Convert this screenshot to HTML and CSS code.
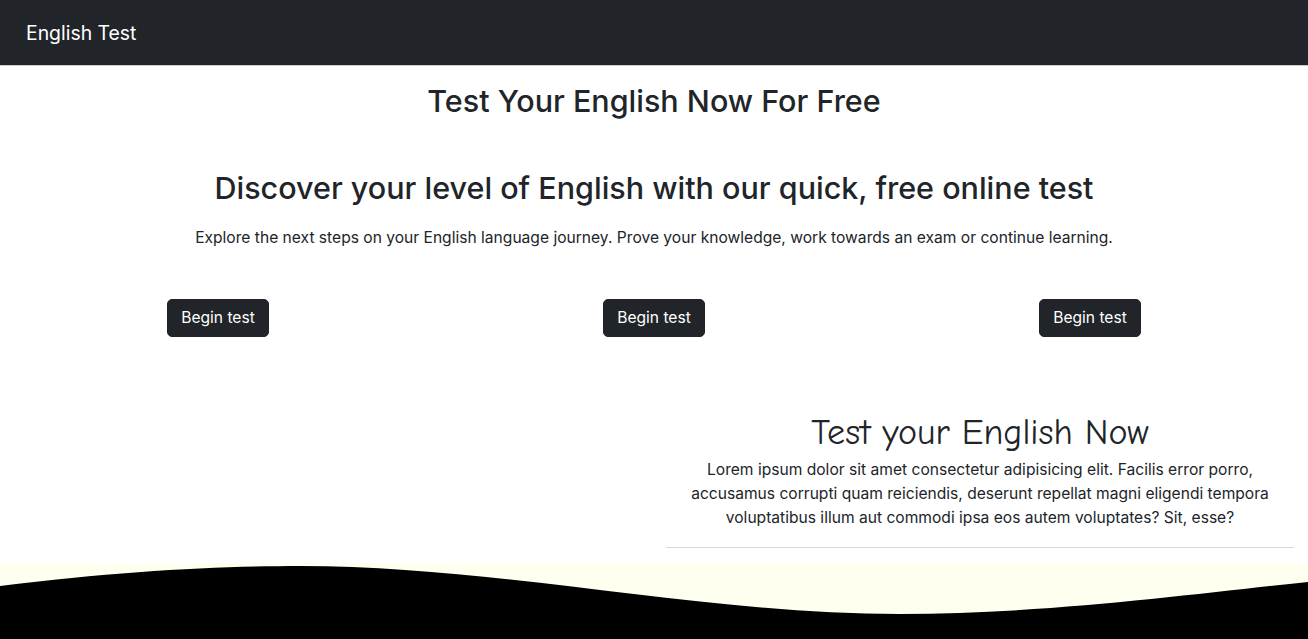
FILE: index.html
```html
<!DOCTYPE html>
<html lang="en">
<head>
<meta charset="utf-8">
<title>English Test</title>
<link rel="stylesheet" href="styles.css">
</head>
<body>
<nav class="navbar"><a class="brand" href="#">English Test</a></nav>
<main>
  <h1 class="title">Test Your English Now For Free</h1>
  <section class="intro">
    <h2 class="intro-head">Discover your level of English with our quick, free online test</h2>
    <p class="intro-text">Explore the next steps on your English language journey. Prove your knowledge, work towards an exam or continue learning.</p>
  </section>
  <div class="btn-row">
    <div class="btn-col"><button class="btn">Begin test</button></div>
    <div class="btn-col"><button class="btn">Begin test</button></div>
    <div class="btn-col"><button class="btn">Begin test</button></div>
  </div>
  <div class="info-row">
    <div class="info-col"></div>
    <div class="info-col info-text">
      <h2 class="fun-head">Test your English Now</h2>
      <p class="lorem">Lorem ipsum dolor sit amet consectetur adipisicing elit. Facilis error porro, accusamus corrupti quam reiciendis, deserunt repellat magni eligendi tempora voluptatibus illum aut commodi ipsa eos autem voluptates? Sit, esse?</p>
      <hr class="rule">
    </div>
  </div>
</main>
<footer class="wave">
  <svg class="wave-svg" viewBox="0 0 1308 76" preserveAspectRatio="none" aria-hidden="true">
    <path d="M0 23 C120 8 220 3 300 3 C500 3 700 51 900 51 C1050 51 1200 30 1308 19 L1308 76 L0 76 Z" fill="#000"/>
  </svg>
</footer>
</body>
</html>
```
FILE: styles.css
```css
* { box-sizing: border-box; }
html, body { margin: 0; padding: 0; }
body {
  font-family: Inter, "Noto Sans", sans-serif;
  color: #212529;
  background: #fff;
  font-size: 15.6px;
  line-height: 24px;
}
.navbar {
  height: 66px;
  background: #212529;
  border-bottom: 1px solid #c8cbcf;
  display: flex;
  align-items: center;
  padding: 0 26px;
}
.brand {
  color: #fff;
  text-decoration: none;
  font-size: 19.4px;
  line-height: 30px;
}
.title {
  margin: 16px 0 0;
  text-align: center;
  font-size: 30.5px;
  font-weight: 500;
  line-height: 37px;
}
.intro { text-align: center; margin-top: 50px; }
.intro-head {
  margin: 0 0 20px;
  font-size: 30.5px;
  font-weight: 500;
  line-height: 37px;
}
.intro-text { margin: 0; }
.btn-row {
  display: grid;
  grid-template-columns: repeat(3, 1fr);
  margin-top: 49px;
}
.btn-col { display: flex; justify-content: center; }
.btn {
  font-family: inherit;
  font-size: 15.6px;
  line-height: 24px;
  height: 38px;
  color: #fff;
  background: #212529;
  border: 1px solid #212529;
  border-radius: 5px;
  padding: 6px 13px;
}
.info-row {
  display: grid;
  grid-template-columns: 1fr 1fr;
  margin-top: 74px;
}
.info-text { padding: 0 14px 0 12px; text-align: center; }
.fun-head {
  margin: 0;
  font-family: "Comic Sans MS", "Comic Neue", cursive;
  font-size: 36px;
  font-weight: 400;
  line-height: 43px;
}
.lorem { margin: 4px 0 0; }
.rule {
  margin: 17px 0 0;
  border: 0;
  border-top: 1px solid #d6d6d6;
}
.wave {
  margin-top: 15px;
  background: #fffff0;
  height: 76px;
}
.wave-svg { display: block; width: 100%; height: 76px; }
```
